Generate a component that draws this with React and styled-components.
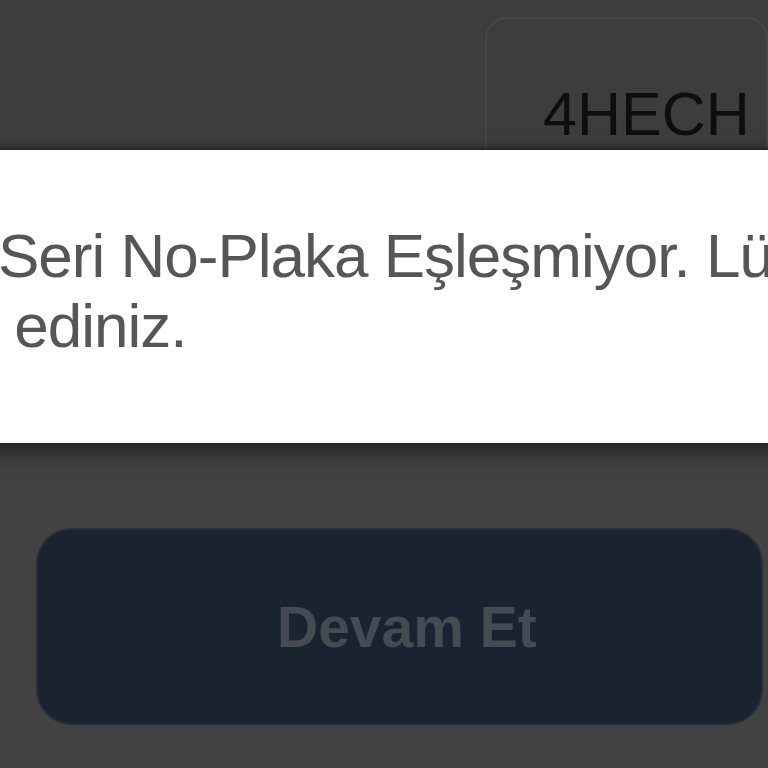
import React from "react";
import styled, { createGlobalStyle } from "styled-components";

const Global = createGlobalStyle`
  html, body { margin: 0; padding: 0; }
  body { background: #424242; font-family: "Liberation Sans", Arial, sans-serif; overflow: hidden; }
`;

const Screen = styled.div`
  position: relative;
  width: 768px;
  height: 768px;
  overflow: hidden;
  background: linear-gradient(#3e3e3e 0, #3e3e3e 150px, #424242 450px);
  display: flex;
  flex-direction: column;
`;

const TopRow = styled.div`
  display: flex;
  justify-content: flex-start;
  padding: 17px 0 0 485px;
`;

const PlateBox = styled.div`
  width: 340px;
  height: 200px;
  box-sizing: border-box;
  border: 2px solid #474747;
  border-radius: 22px;
  background: #3d3d3d;
  padding: 60px 0 0 56px;
  font-size: 61px;
  line-height: 70px;
  color: #0e0e0e;
  white-space: nowrap;
`;

const ActionRow = styled.div`
  padding: 311px 0 0 36px;
`;

const Button = styled.div`
  width: 727px;
  height: 197px;
  box-sizing: border-box;
  border: 2px solid #252e39;
  border-radius: 36px;
  background: #1a2330;
  display: flex;
  align-items: center;
  padding-left: 239px;
  font-weight: 700;
  font-size: 57px;
  color: #464b51;
  white-space: nowrap;
`;

const Modal = styled.div`
  position: absolute;
  top: 150px;
  left: -40px;
  width: 900px;
  height: 293px;
  background: #ffffff;
  box-shadow: 0 6px 22px rgba(0, 0, 0, 0.55), 0 -2px 4px rgba(0, 0, 0, 0.35);
  box-sizing: border-box;
  padding: 71px 0 0 38px;
`;

const Message = styled.div`
  font-size: 62px;
  line-height: 70px;
  letter-spacing: -1px;
  color: #565656;
  white-space: pre;
`;

export default function App() {
  return (
    <>
      <Global />
      <Screen>
        <TopRow>
          <PlateBox>4HECH</PlateBox>
        </TopRow>
        <ActionRow>
          <Button>Devam Et</Button>
        </ActionRow>
        <Modal>
          <Message>{"Seri No-Plaka Eşleşmiyor. Lütfen kontrol\n ediniz."}</Message>
        </Modal>
      </Screen>
    </>
  );
}
